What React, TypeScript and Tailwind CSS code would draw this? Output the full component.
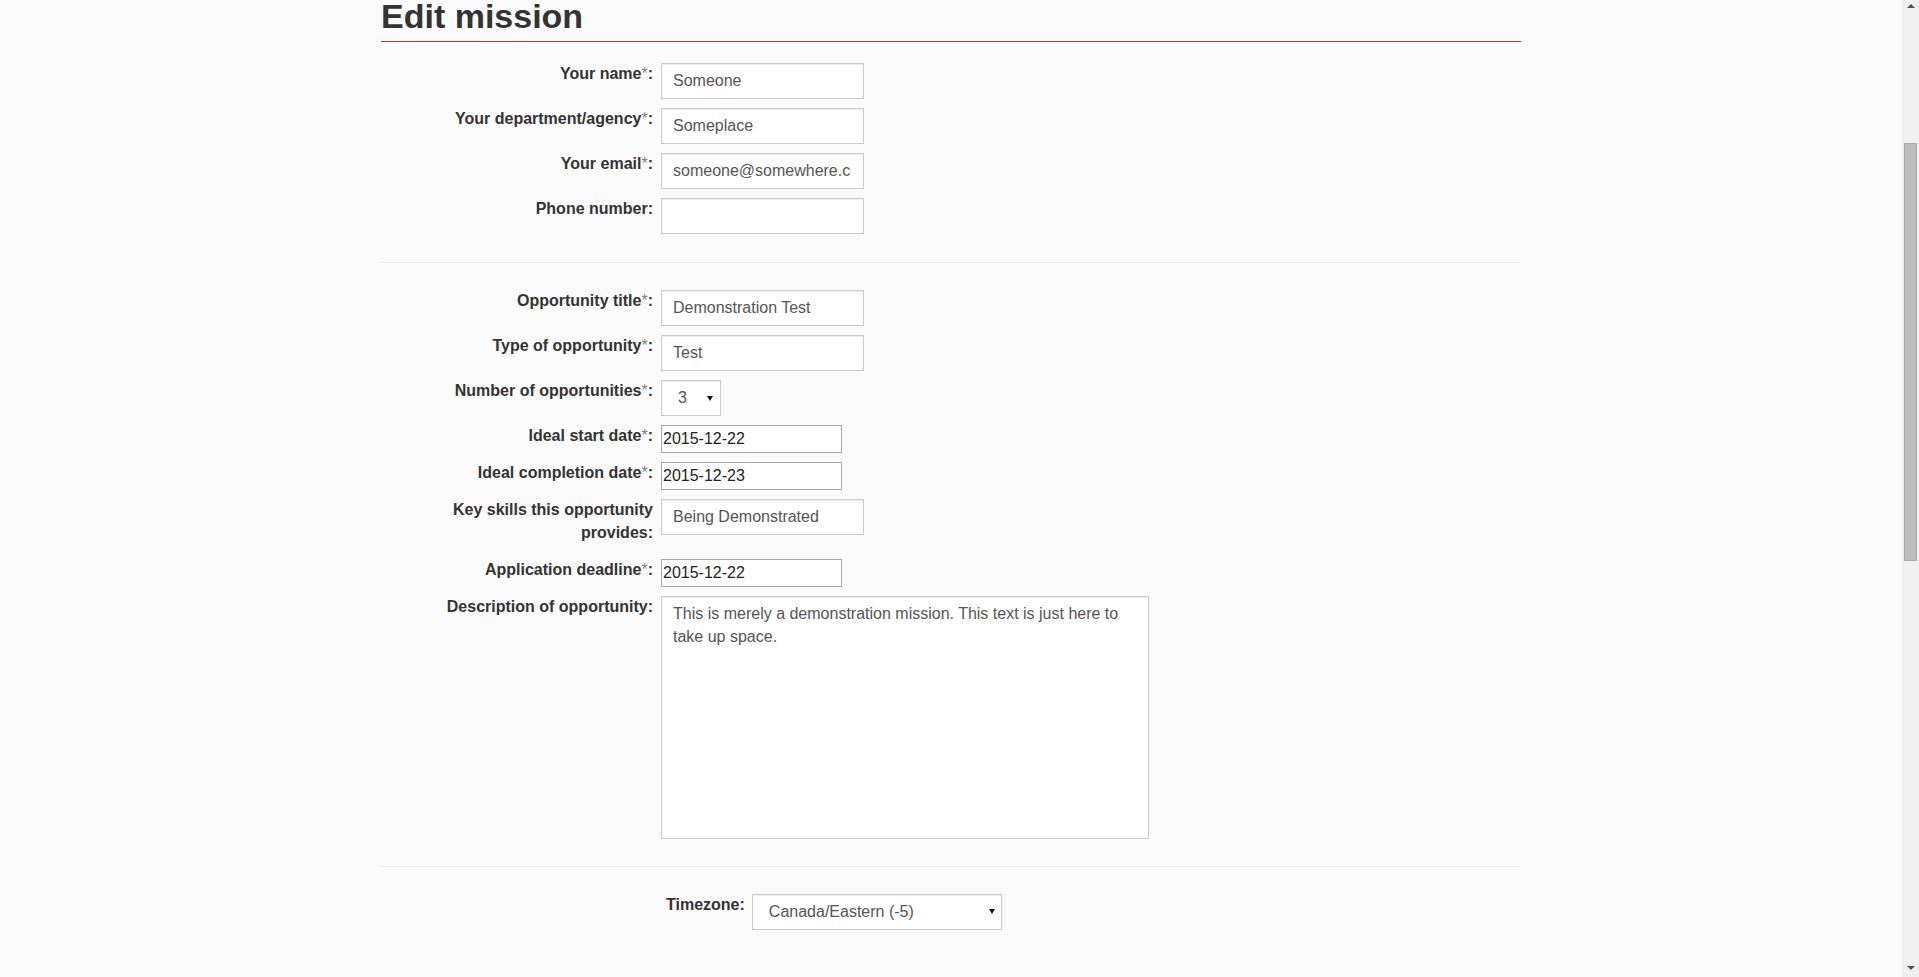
import React from "react";

const inputCls =
  "block h-[36px] w-[203px] border border-[#cccccc] bg-white pl-[11px] pr-[12px] text-[16px] text-[#555555] shadow-[inset_0_1px_1px_rgba(0,0,0,0.075)] outline-none";

const dateCls =
  "block h-[28px] w-[181px] border border-[#a9a9a9] bg-white px-[1px] text-[16px] text-[#222222] outline-none";

function Label({ children, req }: { children: React.ReactNode; req?: boolean }) {
  return (
    <label className="mb-[5px] block w-[272px] shrink-0 text-right text-[16px] font-bold leading-[22.86px] text-[#333333]">
      {children}
      {req && <span className="font-normal text-[#808080]">*</span>}:
    </label>
  );
}

function Row({
  label,
  req,
  children,
}: {
  label: React.ReactNode;
  req?: boolean;
  children: React.ReactNode;
}) {
  return (
    <div className="flex items-start">
      <Label req={req}>{label}</Label>
      <div className="ml-[8px]">{children}</div>
    </div>
  );
}

function Arrow() {
  return (
    <svg width="6" height="5" viewBox="0 0 6 5" className="block">
      <path d="M0 0 L6 0 L3 5 Z" fill="#111111" />
    </svg>
  );
}

function ScrollArrow({ up }: { up?: boolean }) {
  return (
    <svg width="8" height="4" viewBox="0 0 8 4" className="block">
      {up ? (
        <path d="M0 4 L8 4 L4 0 Z" fill="#505050" />
      ) : (
        <path d="M0 0 L8 0 L4 4 Z" fill="#505050" />
      )}
    </svg>
  );
}

export default function App() {
  return (
    <div className="flex h-[977px] w-full overflow-hidden bg-[#fbfbfb] font-['Liberation_Sans',Arial,Helvetica,sans-serif]">
      <main className="min-w-0 flex-1">
        <div className="mx-auto w-[1140px]">
          <h1 className="mt-[-3px] border-b border-[#a94442] pb-[6px] text-[34px] font-bold leading-[38px] text-[#333333]">
            Edit mission
          </h1>

          <div className="mt-[21px] flex flex-col gap-[9px]">
            <Row label="Your name" req>
              <input readOnly className={inputCls} defaultValue="Someone" />
            </Row>
            <Row label="Your department/agency" req>
              <input readOnly className={inputCls} defaultValue="Someplace" />
            </Row>
            <Row label="Your email" req>
              <input readOnly className={inputCls} defaultValue="someone@somewhere.com" />
            </Row>
            <Row label="Phone number">
              <input readOnly className={inputCls} defaultValue="" />
            </Row>
          </div>

          <div className="mb-[27px] mt-[28px] h-px bg-[#eeeeee]" />

          <div className="flex flex-col gap-[9px]">
            <Row label="Opportunity title" req>
              <input readOnly className={inputCls} defaultValue="Demonstration Test" />
            </Row>
            <Row label="Type of opportunity" req>
              <input readOnly className={inputCls} defaultValue="Test" />
            </Row>
            <Row label="Number of opportunities" req>
              <div className="flex h-[36px] w-[60px] items-center justify-between border border-[#cccccc] bg-white pl-[16px] pr-[7px] text-[16px] text-[#555555] shadow-[inset_0_1px_1px_rgba(0,0,0,0.075)]">
                <span>3</span>
                <Arrow />
              </div>
            </Row>
            <Row label="Ideal start date" req>
              <input readOnly className={dateCls} defaultValue="2015-12-22" />
            </Row>
            <Row label="Ideal completion date" req>
              <input readOnly className={dateCls} defaultValue="2015-12-23" />
            </Row>
            <Row
              label={
                <>
                  Key skills this opportunity
                  <br />
                  provides
                </>
              }
            >
              <input readOnly className={inputCls} defaultValue="Being Demonstrated" />
            </Row>
            <Row label="Application deadline" req>
              <input readOnly className={dateCls} defaultValue="2015-12-22" />
            </Row>
            <Row label="Description of opportunity">
              <textarea
                readOnly
                className="block h-[243px] w-[488px] resize-none border border-[#cccccc] bg-white px-[11px] py-[6px] text-[16px] leading-[22.86px] text-[#555555] shadow-[inset_0_1px_1px_rgba(0,0,0,0.075)] outline-none"
                defaultValue="This is merely a demonstration mission. This text is just here to take up space."
              />
            </Row>
          </div>

          <div className="mb-[27px] mt-[27px] h-px bg-[#eeeeee]" />

          <div className="flex items-start pl-[285px]">
            <label className="block text-[16px] font-bold leading-[22.86px] text-[#333333]">
              Timezone:
            </label>
            <div className="ml-[7px] flex h-[36px] w-[250px] items-center justify-between border border-[#cccccc] bg-white pl-[16px] pr-[6px] text-[16px] text-[#555555] shadow-[inset_0_1px_1px_rgba(0,0,0,0.075)]">
              <span>Canada/Eastern (-5)</span>
              <Arrow />
            </div>
          </div>
        </div>
      </main>

      <div className="flex w-[17px] shrink-0 flex-col items-center bg-[#f0f0f0]">
        <div className="flex h-[12px] items-center">
          <ScrollArrow up />
        </div>
        <div className="mt-[131px] h-[418px] w-[13px] border border-[#a8a8a8] bg-[#bcbcbc]" />
        <div className="flex-1" />
        <div className="mb-[7px] flex h-[4px] items-center">
          <ScrollArrow />
        </div>
      </div>
    </div>
  );
}
